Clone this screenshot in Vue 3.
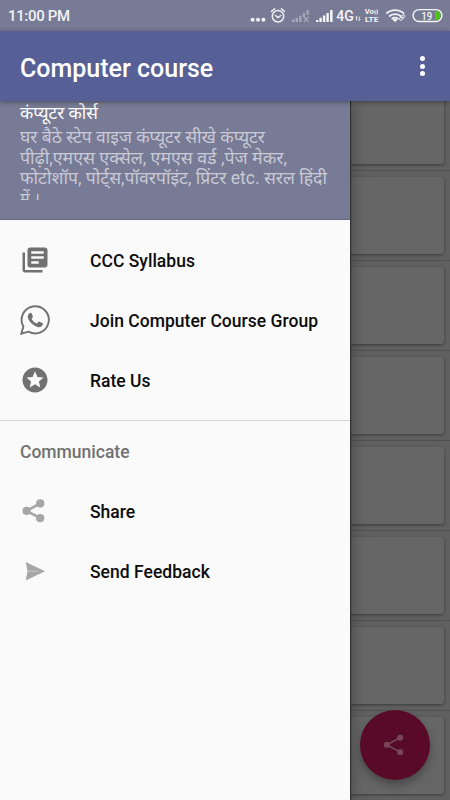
<script setup>
const introLines = [
  { text: 'घर बैठे स्टेप वाइज कंप्यूटर सीखे कंप्यूटर', width: 245 },
  { text: 'पीढ़ी,एमएस एक्सेल, एमएस वर्ड ,पेज मेकर,', width: 267 },
  { text: 'फोटोशॉप, पोर्ट्स,पॉवरपॉइंट, प्रिंटर etc. सरल हिंदी', width: 307 },
  { text: 'में ।', width: 20 }
]

const mainItems = [
  { icon: 'library', label: 'CCC Syllabus' },
  { icon: 'whatsapp', label: 'Join Computer Course Group' },
  { icon: 'stars', label: 'Rate Us' }
]

const communicateItems = [
  { icon: 'share', label: 'Share' },
  { icon: 'send', label: 'Send Feedback' }
]
</script>

<template>
  <div class="screen">
    <header class="status-bar">
      <span class="clock">11:00 PM</span>
      <svg class="status-icons" width="200" height="31" viewBox="250 0 200 31">
        <g fill="#f2f2f5">
          <circle cx="252.6" cy="19.7" r="2" />
          <circle cx="258" cy="19.7" r="2" />
          <circle cx="263.4" cy="19.7" r="2" />
        </g>
        <g fill="none" stroke="#f2f2f5" stroke-width="1.5" stroke-linecap="round">
          <circle cx="278" cy="16.3" r="5.7" />
          <path d="M271.6 11.4l3-2.6M284.4 11.4l-3-2.6M275.4 15.5l2.6 2 2.8-2" />
        </g>
        <g fill="#a5a8b9">
          <path d="M292 19.5h2.6V22H292zM295.6 17.7h2.4V22h-2.4zM299.1 15.7h2.4V22h-2.4zM302.7 13h2.3v4h-2.3zM306.5 10h2.2v5h-2.2z" />
          <path d="M304 17l4.5 4.8M308.5 17l-4.5 4.8" stroke="#a5a8b9" stroke-width="1.3" />
        </g>
        <path fill="#f5f5f8" d="M316 19.9h2.4V22H316zM319.4 17.7h2.4V22h-2.4zM322.9 15.5h2.4V22h-2.4zM326.4 13h2.4v9h-2.4zM330.1 10h2.5v12h-2.5z" />
        <text x="336.3" y="21.3" class="net" textLength="17.5" lengthAdjust="spacingAndGlyphs">4G</text>
        <path d="M356.5 20.5v-4m-1 1l1-1 1 1M359.3 16.5v4m-1-1l1 1 1-1" fill="none" stroke="#dfe0e7" stroke-width="1" />
        <text x="364.7" y="14.2" class="volte" textLength="9" lengthAdjust="spacingAndGlyphs">Vo</text>
        <path d="M375 10.2v4M377.2 9.4v4.8" stroke="#f2f2f5" stroke-width="1.1" />
        <text x="364.9" y="22.2" class="volte" textLength="13.5" lengthAdjust="spacingAndGlyphs">LTE</text>
        <g fill="none" stroke="#f2f2f5" stroke-width="1.8">
          <path d="M386.3 13.6c5-4.7 12.8-4.7 17.7 0M389 16.5c3.5-3.2 8.8-3.2 12.3 0M391.7 19c2-1.7 4.9-1.7 6.7 0" />
        </g>
        <path d="M392.6 19.6l2.5 2.7 2.5-2.7q-2.5-1.8-5 0z" fill="#f2f2f5" />
        <g fill="none" stroke="#dfe0e7" stroke-width="1">
          <rect x="399.2" y="17.5" width="3.8" height="2.4" rx="1.2" transform="rotate(-45 401 18.5)" />
          <rect x="401.4" y="15.5" width="3.8" height="2.4" rx="1.2" transform="rotate(-45 403 16.7)" />
        </g>
        <rect x="413.1" y="9.6" width="28.8" height="11.9" rx="5.9" fill="none" stroke="#f5f5f8" stroke-width="1.4" />
        <path d="M435 11.1h1.5c5.3 0 5.3 8.9 0 8.9H435z" fill="#4cc613" />
        <text x="421.3" y="19.6" class="battery" textLength="11" lengthAdjust="spacingAndGlyphs">19</text>
      </svg>
    </header>

    <div class="app-bar">
      <h1>Computer course</h1>
      <div class="overflow">
        <span v-for="n in 3" :key="n" class="dot"></span>
      </div>
    </div>

    <div class="body">
      <nav class="drawer">
        <div class="drawer-header">
          <svg class="header-text" width="330" height="99" viewBox="0 0 330 99">
            <text x="20" y="17.5" class="course-name" textLength="78" lengthAdjust="spacingAndGlyphs">कंप्यूटर कोर्स</text>
            <text
              v-for="(line, i) in introLines"
              :key="i"
              x="20"
              :y="42 + i * 20.5"
              class="intro"
              :textLength="line.width"
              lengthAdjust="spacingAndGlyphs"
            >{{ line.text }}</text>
          </svg>
        </div>

        <ul class="menu">
          <li v-for="item in mainItems" :key="item.label">
            <svg v-if="item.icon === 'library'" class="icon" width="30" height="30" viewBox="0 0 24 24">
              <path d="M4 6H2v14c0 1.1.9 2 2 2h14v-2H4V6zm16-4H8c-1.1 0-2 .9-2 2v12c0 1.1.9 2 2 2h12c1.1 0 2-.9 2-2V4c0-1.1-.9-2-2-2zm-1 9H9V9h10v2zm-4 4H9v-2h6v2zm4-8H9V5h10v2z" />
            </svg>
            <!-- speech bubble outline with a handset -->
            <svg v-else-if="item.icon === 'whatsapp'" class="icon" width="30" height="30" viewBox="0 0 30 30">
              <path d="M1.3 28.7L3.4 21.6A13.6 13.6 0 1 1 8.5 26.7z" fill="none" stroke="#717171" stroke-width="1.9" />
              <path d="M10 7.9c.8-.2 1.5 0 1.8.8l1 2.5c.2.6 0 1-.4 1.5l-.9 1c1.2 2.3 3 3.9 5.4 4.9l1.4-1.6c.4-.5.8-.5 1.3-.3l2.7 1.3c.7.4.7.8.5 1.6-.4 1.7-2.3 2.7-3.9 2.6-1.5-.1-4.7-1.2-7.5-4-2.3-2.4-3.6-4.6-3.6-6.5 0-1.700 1-3.400 2.200-3.800z" />
            </svg>
            <svg v-else class="icon" width="30" height="30" viewBox="0 0 24 24">
              <path d="M11.99 2C6.47 2 2 6.48 2 12s4.47 10 9.99 10C17.52 22 22 17.52 22 12S17.52 2 11.99 2zm4.24 16L12 15.45 7.77 18l1.12-4.81-3.73-3.23 4.92-.42L12 5l1.92 4.53 4.92.42-3.73 3.23L16.23 18z" />
            </svg>
            <span>{{ item.label }}</span>
          </li>
        </ul>

        <div class="divider"></div>
        <div class="subheader">Communicate</div>

        <ul class="menu">
          <li v-for="item in communicateItems" :key="item.label">
            <svg v-if="item.icon === 'share'" class="icon light" width="30" height="30" viewBox="0 0 30 30">
              <path d="M20.200 7.400L6.600 14.900 20.200 22.200" fill="none" stroke="#a6a6a6" stroke-width="2.6" />
              <circle cx="20.2" cy="7.4" r="4.1" />
              <circle cx="6.6" cy="14.9" r="4.1" />
              <circle cx="20.2" cy="22.2" r="4.1" />
            </svg>
            <svg v-else class="icon light" width="30" height="30" viewBox="0 0 30 30">
              <path d="M5.800 6L25 15.200 5.800 24.500 7.500 15.300z" />
              <path d="M7.400 15.200H18" stroke="#d2d2d2" stroke-width="0.8" />
            </svg>
            <span>{{ item.label }}</span>
          </li>
        </ul>
      </nav>

      <main class="course-list">
        <div v-for="n in 8" :key="n" class="row">
          <div class="card"></div>
        </div>
      </main>
    </div>

    <button class="fab" aria-label="Share">
      <svg width="30" height="30" viewBox="0 0 30 30">
        <path d="M20.2 7.6L6.8 14.8l13.4 7.4" fill="none" stroke="#3f0a1d" stroke-width="3.4" />
        <g fill="#7c4557" stroke="#3f0a1d" stroke-width="0.8">
          <circle cx="20.2" cy="7.6" r="3.6" />
          <circle cx="6.8" cy="14.8" r="3.6" />
          <circle cx="20.2" cy="22.2" r="3.6" />
        </g>
        <path d="M20.2 7.6L6.8 14.8l13.4 7.4" fill="none" stroke="#7c4557" stroke-width="1.8" />
      </svg>
    </button>
  </div>
</template>

<style>
body {
  margin: 0;
  background: #fafafa;
}
</style>

<style scoped>
.screen {
  position: relative;
  display: flex;
  flex-direction: column;
  width: 450px;
  height: 800px;
  overflow: hidden;
  font-family: Roboto, 'Noto Sans', sans-serif;
}

.status-bar {
  display: flex;
  justify-content: space-between;
  flex: none;
  height: 31px;
  background: #777b95;
}

.clock {
  padding-left: 8px;
  font-size: 15px;
  font-weight: 500;
  line-height: 33px;
  letter-spacing: -0.35px;
  color: #f2f2f5;
}

.status-icons text {
  fill: #f5f5f8;
}

.net {
  font-size: 14px;
  font-weight: 500;
}

.volte {
  font-size: 6.7px;
  font-weight: 700;
}

.battery {
  font-size: 11px;
  font-weight: 500;
}

.app-bar {
  display: flex;
  justify-content: space-between;
  align-items: center;
  flex: none;
  height: 70px;
  box-sizing: border-box;
  padding: 0 25px 0 20px;
  background: #565f96;
  box-shadow: 0 1px 5px rgba(0, 0, 0, 0.4);
  z-index: 2;
}

.app-bar h1 {
  margin: 4px 0 0;
  font-size: 25px;
  font-weight: 500;
  color: #fff;
}

.overflow {
  display: flex;
  flex-direction: column;
  gap: 2.5px;
}

.dot {
  width: 5px;
  height: 5px;
  border-radius: 50%;
  background: #fff;
}

.body {
  display: flex;
  flex: none;
  height: 699px;
}

.drawer {
  flex: 0 0 350px;
  background: #fafafa;
  box-shadow: 0 0 1px 1px #303030, 0 0 16px rgba(0, 0, 0, 0.35);
  z-index: 1;
}

.drawer-header {
  height: 118px;
  background: #777b95;
  border-bottom: 1px solid #65698a;
}

.header-text {
  display: block;
}

.course-name {
  font-size: 17.5px;
  fill: #fff;
}

.intro {
  font-size: 17.5px;
  fill: #c9cad5;
}

.menu {
  margin: 0;
  padding: 10px 0;
  list-style: none;
}

.menu li {
  display: flex;
  align-items: center;
  gap: 40px;
  height: 60px;
  padding-left: 20px;
  font-size: 17.5px;
  font-weight: 500;
  color: #0c0c0c;
}

.menu li span {
  padding-top: 2px;
  letter-spacing: 0.02px;
}

.icon {
  fill: #717171;
}

.icon.light {
  fill: #a6a6a6;
}

.divider {
  height: 1px;
  background: #d5d5d5;
}

.subheader {
  height: 50px;
  padding-left: 20px;
  font-size: 17.5px;
  font-weight: 500;
  line-height: 62px;
  color: #717171;
}

/* the list is scrolled, so its first row starts under the app bar */
.course-list {
  flex: 1;
  height: 719px;
  margin-top: -20px;
  overflow: hidden;
  background: #606060;
}

.row {
  box-sizing: border-box;
  height: 90px;
  padding: 6px 6px 6px 0;
  border-bottom: 1px solid #505050;
}

.card {
  height: 77px;
  border-radius: 0 3px 3px 0;
  background: #666;
  box-shadow: 0 1px 3px rgba(0, 0, 0, 0.4);
}

.fab {
  position: absolute;
  right: 20px;
  bottom: 20px;
  z-index: 2;
  display: flex;
  align-items: center;
  justify-content: center;
  width: 70px;
  height: 70px;
  padding: 0;
  border: 0;
  border-radius: 50%;
  background: #580a28;
  box-shadow: 0 5px 9px rgba(0, 0, 0, 0.3);
}
</style>
